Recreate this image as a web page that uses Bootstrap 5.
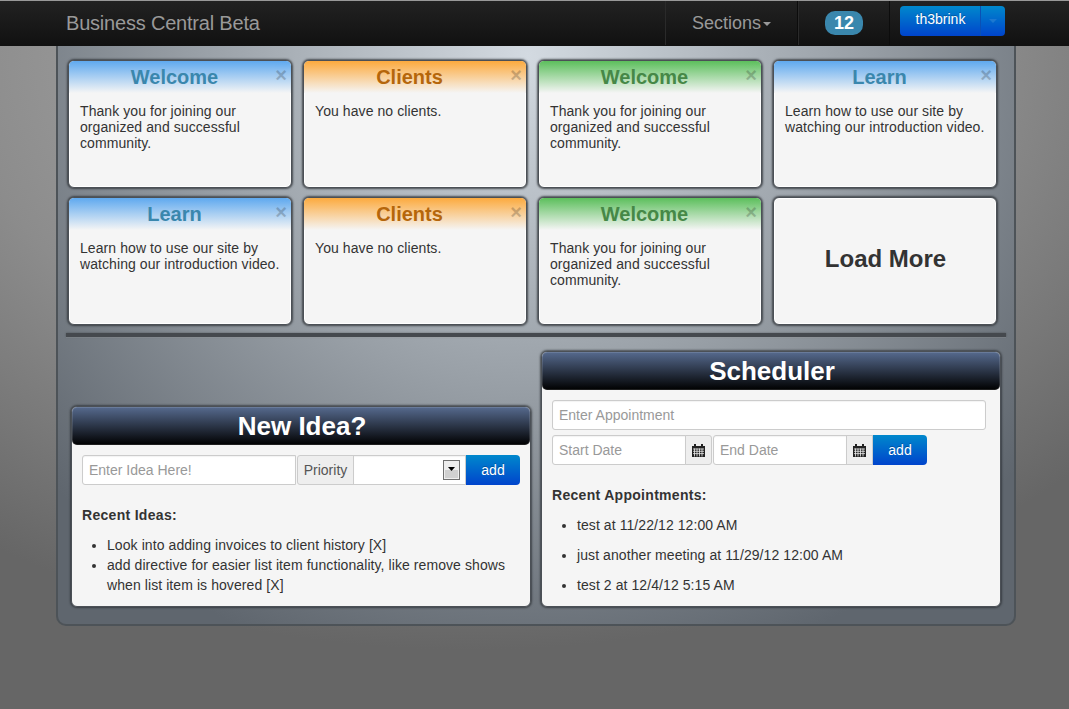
<!DOCTYPE html>
<html lang="en">
<head>
<meta charset="utf-8">
<title>Business Central Beta</title>
<link href="https://cdn.jsdelivr.net/npm/bootstrap@5.3.0/dist/css/bootstrap.min.css" rel="stylesheet">
<style>
html,body{height:100%}
body{font-family:"Liberation Sans",Arial,sans-serif;font-size:14px;line-height:20px;color:#333;min-height:709px;background:#666 radial-gradient(ellipse 850px 600px at 470px 50px,#b4b4b4 0%,#8c8c8c 60%,#666 100%) no-repeat}
.topbar{height:46px;padding:0;background:linear-gradient(#222,#111);border-top:1px solid #999;border-bottom:1px solid #111;flex-wrap:nowrap}
.topinner{width:940px;margin-left:66px;display:flex;align-items:center;height:100%}
.brandname{width:194px;font-size:20px;letter-spacing:-.2px;color:#999;margin:0;padding:0;line-height:44px;white-space:nowrap}
.brandname:hover{color:#999}
.navcell{height:44px;display:flex;align-items:center;border-left:1px solid #2a2a2a;border-right:1px solid #0c0c0c}
.secs{width:133px;margin-left:405px;justify-content:center;color:#999;font-size:18px;text-decoration:none}
.secs:hover{color:#999}
.caretlight{width:0;height:0;border-left:4px solid transparent;border-right:4px solid transparent;border-top:4px solid #999;margin-left:2px;margin-top:2px}
.countcell{width:92px;justify-content:center}
.countpill{background:#3a87ad;color:#fff;font-size:18px;font-weight:700;line-height:24px;width:38px;text-align:center;border-radius:10px}
.userbtns{flex:0 0 106px;width:106px;margin-left:10px;margin-top:-4px}
.bluebtn,.bluebtn:hover,.bluebtn:active{background:linear-gradient(#0088cc,#0044cc);border:0;color:#fff;font-size:14px;border-radius:4px;text-shadow:0 -1px 0 rgba(0,0,0,.25)}
.userbtns>.usermain{flex:0 0 81px;width:81px;height:30px;padding:0 0 4px}
.userbtns>.usercaret{flex:0 0 25px;width:25px;height:30px;margin-left:0;padding:0;display:flex;align-items:center;justify-content:center;border-left:1px solid #0b50b4}
.caretblue{width:0;height:0;border-left:4px solid transparent;border-right:4px solid transparent;border-top:4px solid #1c78d0}
.shell{width:960px;height:580px;margin-left:56px;padding:14px 8px 0 10px;border:2px solid #4d5358;border-top:0;border-radius:0 0 10px 10px;background:#5f666e radial-gradient(circle 640px at 470px 10px,#d3dae1 0%,#989fa6 52%,#5f666e 100%) no-repeat}
.tilegrid{display:grid;grid-template-columns:repeat(4,224px);grid-auto-rows:128px;gap:9px 11px}
.tile{position:relative;background:#f5f5f5;border:1px solid #4b5056;border-radius:6px;box-shadow:0 0 2px 1px rgba(40,44,48,.75),inset 0 0 0 1px #fff;overflow:hidden}
.tilehead{height:32px;margin:0;padding:4px 11px 0 0;font-size:20px;line-height:24px;font-weight:700;text-align:center}
.tileblue{background:linear-gradient(#5fa9ef,#f5f5f5);color:#3a87ad}
.tileorange{background:linear-gradient(#fcaa3e,#f5f5f5);color:#b5660b}
.tilegreen{background:linear-gradient(#5cbf5c,#f5f5f5);color:#468847}
.tileclose{position:absolute;top:5px;right:4px;color:#000;opacity:.2;font-size:20px;line-height:18px;font-weight:700;background:none;border:0;padding:0}
.tilebody{padding:10px 8px 0 11px;margin:0;line-height:16px;letter-spacing:.08px}
.loadtile{display:flex;align-items:center;justify-content:center;padding:0 0 5px 1px;font-size:24px;font-weight:700;color:#333}
.splitline{height:4px;width:940px;margin:8px 0 0 -2px;border:0;opacity:1;background:#45494e;box-shadow:0 1px 1px rgba(255,255,255,.15),0 0 2px rgba(0,0,0,.4)}
.lowerrow{display:flex;align-items:flex-end;gap:10px;margin:14px 0 0 3px}
.widget{width:460px;background:#f5f5f5;border:1px solid #4b5056;border-radius:6px;box-shadow:0 0 2px 1px rgba(40,44,48,.7)}
.widgethead{margin:0;height:38px;padding-left:2px;background:linear-gradient(#566a8e,#000);border-radius:5px;box-shadow:inset 0 0 0 1px rgba(255,255,255,.12);color:#fff;font-size:26px;line-height:38px;font-weight:700;text-align:center}
.widgetbody{padding:10px 10px 0}
.fieldrow{flex-wrap:nowrap}
.fieldrow .form-control,.fieldrow .form-select,.wideinput{height:30px;min-height:30px;padding:4px 6px;font-size:14px;line-height:20px;border-color:#ccc;border-radius:3px;color:#555;box-shadow:inset 0 1px 1px rgba(0,0,0,.05)}
.fieldrow .form-control::placeholder,.wideinput::placeholder{color:#999}
.addonbox{height:30px;padding:0;justify-content:center;font-size:14px;color:#555;background:#eee;border-color:#ccc;border-radius:3px}
.ideainput{flex:0 0 214px!important;width:214px!important;border-radius:3px 0 0 3px!important}
.priobox{width:57px;margin-left:1px!important;border-radius:3px 0 0 3px!important}
.prioselect{flex:0 0 113px!important;width:113px!important;border-radius:0!important;background-image:url("data:image/svg+xml,%3Csvg xmlns='http://www.w3.org/2000/svg' width='17' height='20'%3E%3Crect x='.5' y='.5' width='16' height='19' fill='%23eee' stroke='%23707070'/%3E%3Crect x='2' y='10' width='13' height='8' fill='%23d0d0d0'/%3E%3Cpath d='M5 7h7l-3.500 4z' fill='%23000'/%3E%3C/svg%3E")!important;background-position:right 5px center!important;background-size:17px 20px!important}
.addbtn{width:54px;height:30px;padding:0;border-radius:0 4px 4px 0!important;margin-left:0!important}
.wideinput{width:434px;margin-bottom:5px}
.dateinput{flex:0 0 134px!important;width:134px!important;border-radius:3px 0 0 3px!important}
.dateend{flex:0 0 134px!important;width:134px!important;border-radius:3px 0 0 3px!important;margin-left:1px!important}
.calbox{width:27px;border-radius:0 3px 3px 0!important}
.calend{width:27px;border-radius:0!important}
.calsvg{display:block}
.listhead{margin:20px 0 0;font-weight:700;font-size:14px;letter-spacing:.3px;line-height:20px}
.idealist{margin:10px 0 0;padding-left:25px;line-height:20px;letter-spacing:.08px}
.apptlist{margin:10px 0 0;padding-left:25px;line-height:20px;letter-spacing:.08px}
.apptlist li{margin-bottom:10px}
.apptlist li:last-child{margin-bottom:0}
.ideabody{padding-bottom:11px}
.apptbody{padding-bottom:11px}
</style>
</head>
<body>
<nav class="navbar topbar">
  <div class="topinner">
    <a class="navbar-brand brandname" href="#">Business Central Beta</a>
    <a class="navcell secs" href="#">Sections<span class="caretlight"></span></a>
    <div class="navcell countcell"><span class="countpill">12</span></div>
    <div class="btn-group userbtns">
      <button type="button" class="btn bluebtn usermain">th3brink</button>
      <button type="button" class="btn bluebtn usercaret"><span class="caretblue"></span></button>
    </div>
  </div>
</nav>
<main class="shell">
  <div class="tilegrid">
    <div class="tile"><h5 class="tilehead tileblue">Welcome</h5><button class="tileclose">×</button><p class="tilebody">Thank you for joining our organized and successful community.</p></div>
    <div class="tile"><h5 class="tilehead tileorange">Clients</h5><button class="tileclose">×</button><p class="tilebody">You have no clients.</p></div>
    <div class="tile"><h5 class="tilehead tilegreen">Welcome</h5><button class="tileclose">×</button><p class="tilebody">Thank you for joining our organized and successful community.</p></div>
    <div class="tile"><h5 class="tilehead tileblue">Learn</h5><button class="tileclose">×</button><p class="tilebody">Learn how to use our site by watching our introduction video.</p></div>
    <div class="tile"><h5 class="tilehead tileblue">Learn</h5><button class="tileclose">×</button><p class="tilebody">Learn how to use our site by watching our introduction video.</p></div>
    <div class="tile"><h5 class="tilehead tileorange">Clients</h5><button class="tileclose">×</button><p class="tilebody">You have no clients.</p></div>
    <div class="tile"><h5 class="tilehead tilegreen">Welcome</h5><button class="tileclose">×</button><p class="tilebody">Thank you for joining our organized and successful community.</p></div>
    <div class="tile loadtile">Load More</div>
  </div>
  <hr class="splitline">
  <div class="lowerrow">
    <section class="widget">
      <h4 class="widgethead">New Idea?</h4>
      <div class="widgetbody ideabody">
        <div class="input-group fieldrow">
          <input class="form-control ideainput" placeholder="Enter Idea Here!">
          <span class="input-group-text addonbox priobox">Priority</span>
          <select class="form-select prioselect" aria-label="Priority"><option></option></select>
          <button class="btn bluebtn addbtn" type="button">add</button>
        </div>
        <p class="listhead">Recent Ideas:</p>
        <ul class="idealist">
          <li>Look into adding invoices to client history [X]</li>
          <li>add directive for easier list item functionality, like remove shows when list item is hovered [X]</li>
        </ul>
      </div>
    </section>
    <section class="widget">
      <h4 class="widgethead">Scheduler</h4>
      <div class="widgetbody apptbody">
        <input class="form-control wideinput" placeholder="Enter Appointment">
        <div class="input-group fieldrow">
          <input class="form-control dateinput" placeholder="Start Date">
          <span class="input-group-text addonbox calbox"><svg class="calsvg" width="13" height="13" viewBox="0 0 13 13"><path fill="#222" d="M2 0h2v2h5V0h2v2h2v11H0V2h2z"/><path stroke="#eee" stroke-width=".8" d="M1 5h11M1 7.300h11M1 9.600h11M2.500 4.500v8M5 4.500v8M7.500 4.500v8M10 4.500v8"/></svg></span>
          <input class="form-control dateend" placeholder="End Date">
          <span class="input-group-text addonbox calend"><svg class="calsvg" width="13" height="13" viewBox="0 0 13 13"><path fill="#222" d="M2 0h2v2h5V0h2v2h2v11H0V2h2z"/><path stroke="#eee" stroke-width=".8" d="M1 5h11M1 7.300h11M1 9.600h11M2.500 4.500v8M5 4.500v8M7.500 4.500v8M10 4.500v8"/></svg></span>
          <button class="btn bluebtn addbtn" type="button">add</button>
        </div>
        <p class="listhead">Recent Appointments:</p>
        <ul class="apptlist">
          <li>test at 11/22/12 12:00 AM</li>
          <li>just another meeting at 11/29/12 12:00 AM</li>
          <li>test 2 at 12/4/12 5:15 AM</li>
        </ul>
      </div>
    </section>
  </div>
</main>
<script src="https://cdn.jsdelivr.net/npm/bootstrap@5.3.0/dist/js/bootstrap.bundle.min.js"></script>
</body>
</html>
